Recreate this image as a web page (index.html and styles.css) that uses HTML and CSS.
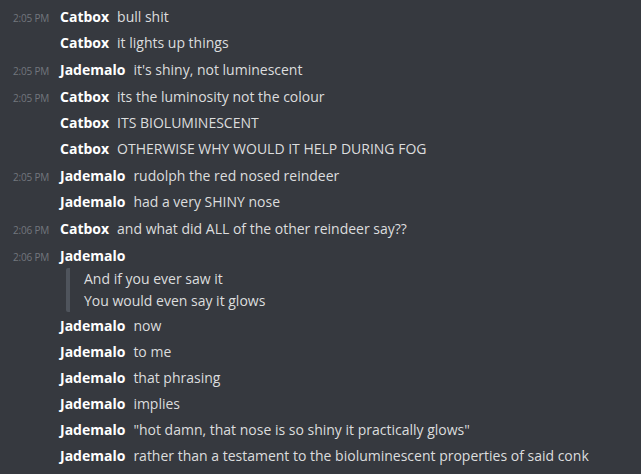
FILE: index.html
```html
<!DOCTYPE html>
<html>
<head>
<meta charset="utf-8">
<link rel="stylesheet" href="styles.css">
</head>
<body>
<div class="chat">
  <div class="group">
    <div class="msg"><span class="time">2:05 PM</span><span class="name">Catbox</span><span class="text">bull shit</span></div>
    <div class="msg"><span class="time"></span><span class="name">Catbox</span><span class="text">it lights up things</span></div>
  </div>
  <div class="group">
    <div class="msg"><span class="time">2:05 PM</span><span class="name">Jademalo</span><span class="text">it's shiny, not luminescent</span></div>
  </div>
  <div class="group">
    <div class="msg"><span class="time">2:05 PM</span><span class="name">Catbox</span><span class="text">its the luminosity not the colour</span></div>
    <div class="msg"><span class="time"></span><span class="name">Catbox</span><span class="text">ITS BIOLUMINESCENT</span></div>
    <div class="msg"><span class="time"></span><span class="name">Catbox</span><span class="text">OTHERWISE WHY WOULD IT HELP DURING FOG</span></div>
  </div>
  <div class="group">
    <div class="msg"><span class="time">2:05 PM</span><span class="name">Jademalo</span><span class="text">rudolph the red nosed reindeer</span></div>
    <div class="msg"><span class="time"></span><span class="name">Jademalo</span><span class="text">had a very SHINY nose</span></div>
  </div>
  <div class="group">
    <div class="msg"><span class="time">2:06 PM</span><span class="name">Catbox</span><span class="text">and what did ALL of the other reindeer say??</span></div>
  </div>
  <div class="group">
    <div class="msg"><span class="time">2:06 PM</span><span class="name">Jademalo</span></div>
    <blockquote class="quote">
      <div>And if you ever saw it</div>
      <div>You would even say it glows</div>
    </blockquote>
    <div class="msg"><span class="time"></span><span class="name">Jademalo</span><span class="text">now</span></div>
    <div class="msg"><span class="time"></span><span class="name">Jademalo</span><span class="text">to me</span></div>
    <div class="msg"><span class="time"></span><span class="name">Jademalo</span><span class="text">that phrasing</span></div>
    <div class="msg"><span class="time"></span><span class="name">Jademalo</span><span class="text">implies</span></div>
    <div class="msg"><span class="time"></span><span class="name">Jademalo</span><span class="text">"hot damn, that nose is so shiny it practically glows"</span></div>
    <div class="msg"><span class="time"></span><span class="name">Jademalo</span><span class="text">rather than a testament to the bioluminescent properties of said conk</span></div>
  </div>
</div>
</body>
</html>
```

FILE: styles.css
```css
html, body {
  margin: 0;
  padding: 0;
  background: #36393f;
}
body {
  width: 641px;
  height: 474px;
  overflow: hidden;
  font-family: "Open Sans", "Noto Sans", sans-serif;
}
.chat {
  display: flex;
  flex-direction: column;
  gap: 1px;
  padding-top: 4px;
}
.group {
  display: flex;
  flex-direction: column;
}
.msg {
  display: flex;
  align-items: baseline;
  height: 26px;
  line-height: 26px;
}
.time {
  width: 60px;
  box-sizing: border-box;
  padding-left: 13px;
  flex: none;
  font-size: 10px;
  color: #72767d;
  letter-spacing: -0.2px;
}
.name {
  font-size: 14px;
  font-weight: 700;
  color: #ffffff;
  margin-right: 8px;
}
.text {
  font-size: 14px;
  color: #dcddde;
}
.quote {
  margin: -1px 0 1px 66px;
  padding: 0 0 0 14px;
  border-left: 4px solid #4f545c;
  border-radius: 2px;
  font-size: 14px;
  line-height: 22px;
  color: #dcddde;
}
```
